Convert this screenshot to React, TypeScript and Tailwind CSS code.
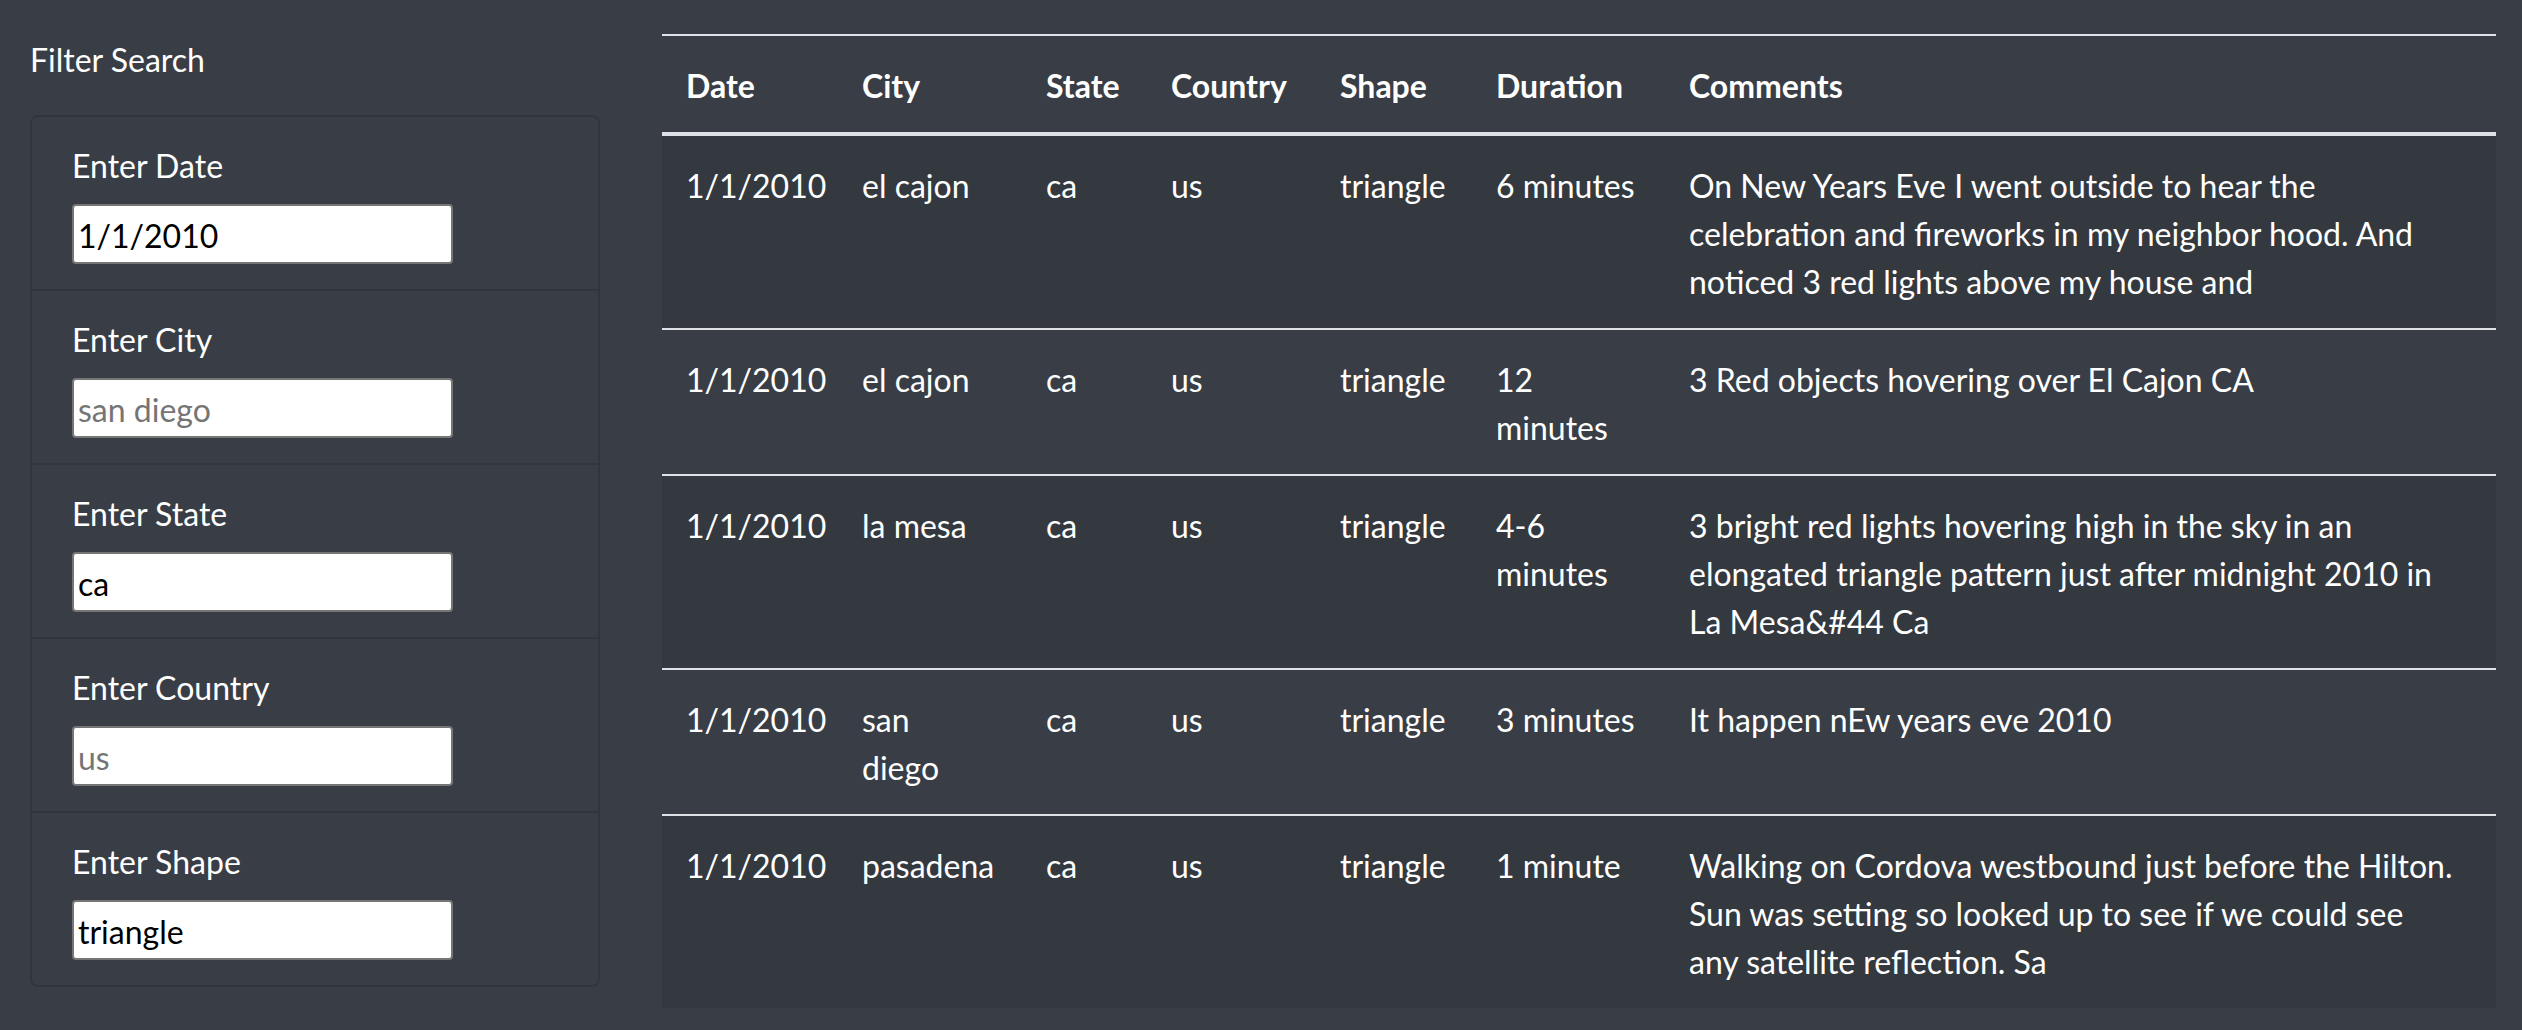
import React from 'react';

type Sighting = {
  date: string;
  city: string[];
  state: string;
  country: string;
  shape: string;
  duration: string[];
  comments: string[];
};

const sightings: Sighting[] = [
  {
    date: '1/1/2010',
    city: ['el cajon'],
    state: 'ca',
    country: 'us',
    shape: 'triangle',
    duration: ['6 minutes'],
    comments: [
      'On New Years Eve I went outside to hear the',
      'celebration and fireworks in my neighbor hood. And',
      'noticed 3 red lights above my house and',
    ],
  },
  {
    date: '1/1/2010',
    city: ['el cajon'],
    state: 'ca',
    country: 'us',
    shape: 'triangle',
    duration: ['12', 'minutes'],
    comments: ['3 Red objects hovering over El Cajon CA'],
  },
  {
    date: '1/1/2010',
    city: ['la mesa'],
    state: 'ca',
    country: 'us',
    shape: 'triangle',
    duration: ['4-6', 'minutes'],
    comments: [
      '3 bright red lights hovering high in the sky in an',
      'elongated triangle pattern just after midnight 2010 in',
      'La Mesa&#44 Ca',
    ],
  },
  {
    date: '1/1/2010',
    city: ['san', 'diego'],
    state: 'ca',
    country: 'us',
    shape: 'triangle',
    duration: ['3 minutes'],
    comments: ['It happen nEw years eve 2010'],
  },
  {
    date: '1/1/2010',
    city: ['pasadena'],
    state: 'ca',
    country: 'us',
    shape: 'triangle',
    duration: ['1 minute'],
    comments: [
      'Walking on Cordova westbound just before the Hilton.',
      'Sun was setting so looked up to see if we could see',
      'any satellite reflection. Sa',
    ],
  },
];

const filters = [
  { label: 'Enter Date', value: '1/1/2010', placeholder: '' },
  { label: 'Enter City', value: '', placeholder: 'san diego' },
  { label: 'Enter State', value: 'ca', placeholder: '' },
  { label: 'Enter Country', value: '', placeholder: 'us' },
  { label: 'Enter Shape', value: 'triangle', placeholder: '' },
];

function Lines({ lines }: { lines: string[] }) {
  return (
    <>
      {lines.map((line) => (
        <span key={line} className="block whitespace-nowrap">
          {line}
        </span>
      ))}
    </>
  );
}

function FilterPanel() {
  return (
    <aside className="w-[630px] shrink-0 px-[30px] pt-[36px]">
      <h5 className="mb-[31px]">Filter Search</h5>
      <ul className="rounded-[8px] border-2 border-[rgba(0,0,0,0.125)]">
        {filters.map((f, i) => (
          <li
            key={f.label}
            className={`px-[40px] pt-[25px] pb-[25px] ${i > 0 ? 'border-t-2 border-[rgba(0,0,0,0.125)]' : ''}`}
          >
            <label className="mb-[14px] block">{f.label}</label>
            <input
              type="text"
              defaultValue={f.value}
              placeholder={f.placeholder}
              className="block h-[60px] w-[381px] rounded-[4px] border-2 border-[#767676] bg-white px-[4px] pt-[3px] text-[32px] leading-[48px] text-black placeholder:text-[#757575] outline-none"
            />
          </li>
        ))}
      </ul>
    </aside>
  );
}

function SightingsTable() {
  const cell = 'px-[24px] pt-[26px] pb-[22px] align-top text-left';
  return (
    <main className="flex-1 pl-[32px] pr-[26px] pt-[34px]">
      <table className="w-[1834px] table-fixed border-collapse">
        <colgroup>
          <col className="w-[176px]" />
          <col className="w-[184px]" />
          <col className="w-[125px]" />
          <col className="w-[169px]" />
          <col className="w-[156px]" />
          <col className="w-[193px]" />
          <col className="w-[831px]" />
        </colgroup>
        <thead>
          <tr className="border-t-2 border-b-4 border-[#dee2e6]">
            {['Date', 'City', 'State', 'Country', 'Shape', 'Duration', 'Comments'].map((h) => (
              <th key={h} className={`${cell} font-bold`}>
                {h}
              </th>
            ))}
          </tr>
        </thead>
        <tbody>
          {sightings.map((s, i) => (
            <tr
              key={i}
              className={`border-t-2 border-[#dee2e6] ${i % 2 === 0 ? 'bg-[#343940]' : ''}`}
            >
              <td className={cell}>{s.date}</td>
              <td className={cell}>
                <Lines lines={s.city} />
              </td>
              <td className={cell}>{s.state}</td>
              <td className={cell}>{s.country}</td>
              <td className={cell}>{s.shape}</td>
              <td className={cell}>
                <Lines lines={s.duration} />
              </td>
              <td className={cell}>
                <Lines lines={s.comments} />
              </td>
            </tr>
          ))}
        </tbody>
      </table>
    </main>
  );
}

export default function App() {
  return (
    <div className="flex min-h-screen bg-[#393e46] font-[Lato,'Liberation_Sans',sans-serif] text-[32px] leading-[48px] text-white">
      <FilterPanel />
      <SightingsTable />
    </div>
  );
}
